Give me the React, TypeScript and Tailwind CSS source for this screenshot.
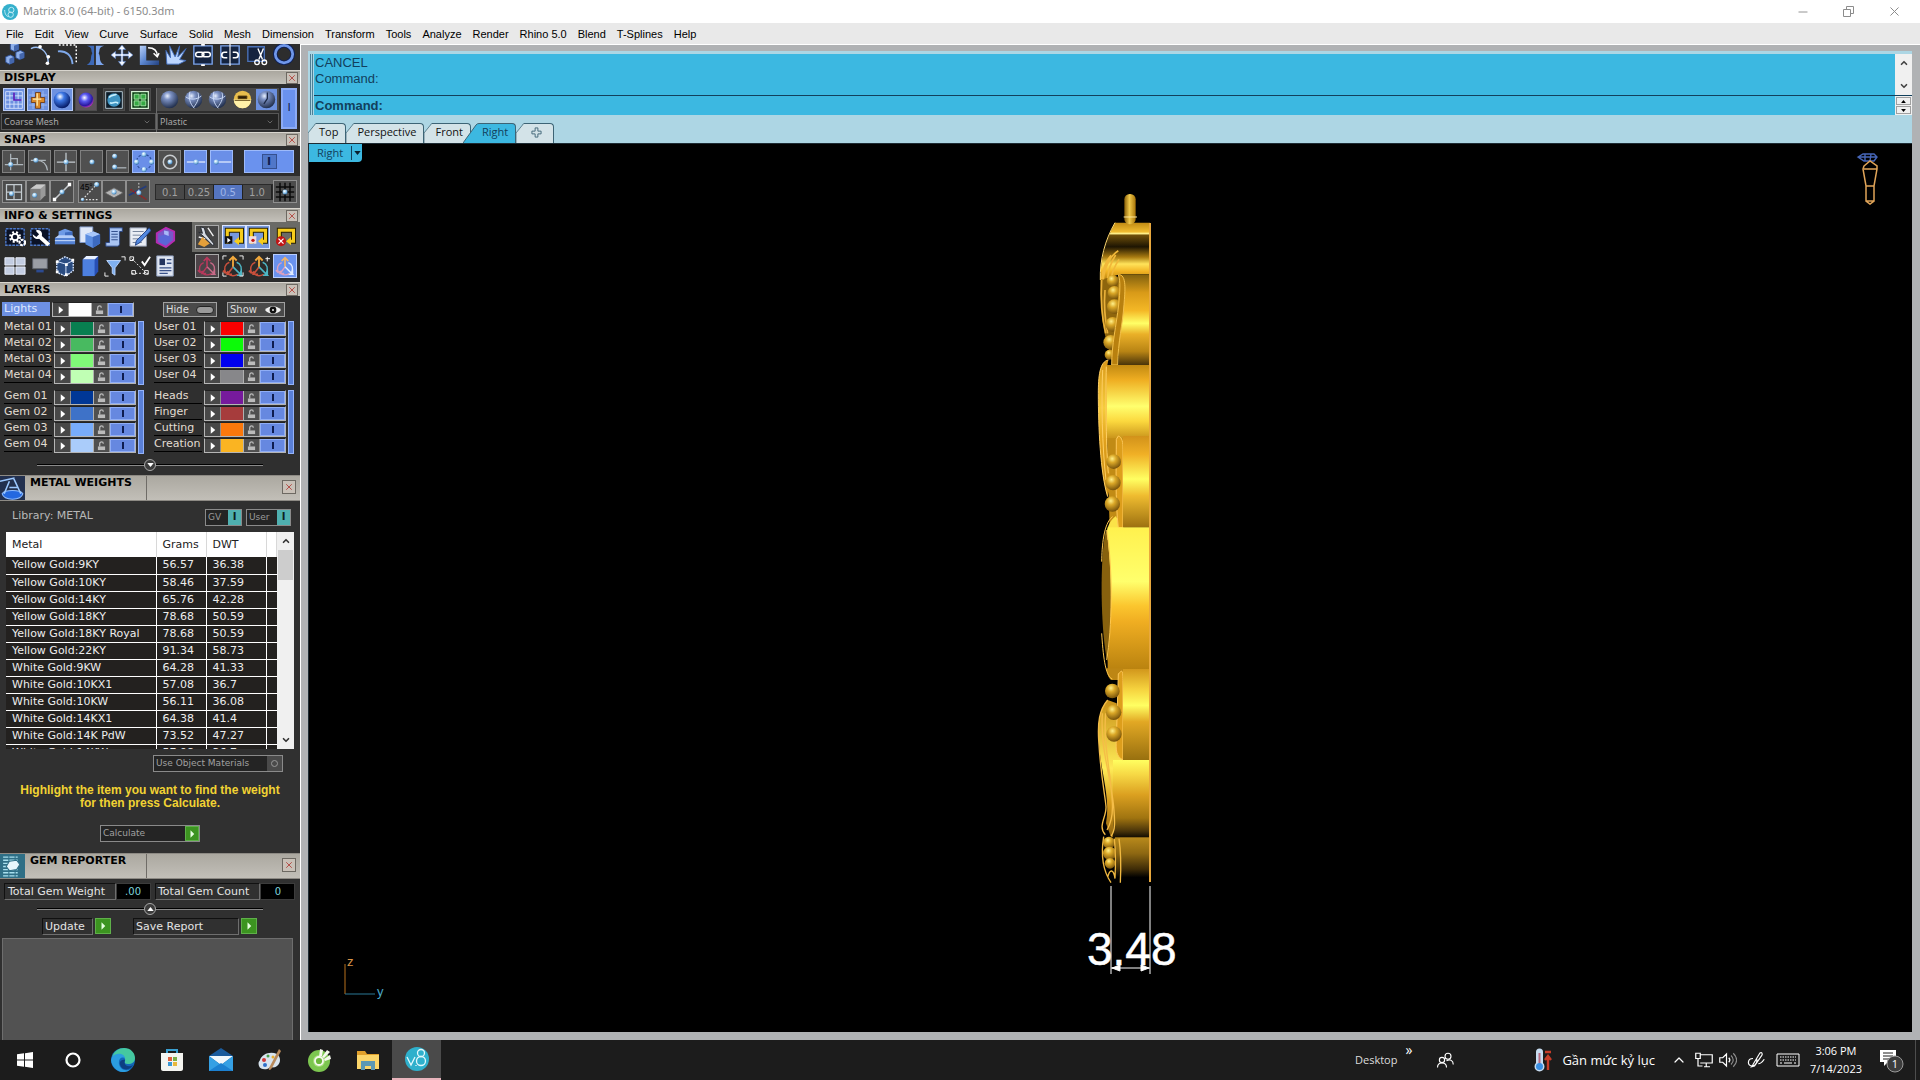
import type { ReactNode } from "react";
import { X, ChevronDown, ChevronUp, Minus } from "lucide-react";

const menus = [
  "File", "Edit", "View", "Curve", "Surface", "Solid", "Mesh", "Dimension", "Transform",
  "Tools", "Analyze", "Render", "Rhino 5.0", "Blend", "T-Splines", "Help",
];

const metals = [
  ["Yellow Gold:9KY", "56.57", "36.38"],
  ["Yellow Gold:10KY", "58.46", "37.59"],
  ["Yellow Gold:14KY", "65.76", "42.28"],
  ["Yellow Gold:18KY", "78.68", "50.59"],
  ["Yellow Gold:18KY Royal", "78.68", "50.59"],
  ["Yellow Gold:22KY", "91.34", "58.73"],
  ["White Gold:9KW", "64.28", "41.33"],
  ["White Gold:10KX1", "57.08", "36.7"],
  ["White Gold:10KW", "56.11", "36.08"],
  ["White Gold:14KX1", "64.38", "41.4"],
  ["White Gold:14K PdW", "73.52", "47.27"],
  ["White Gold:14KW", "57.98", "36.7"],
];

type Layer = { name: string; swatch: string };

const layerGroups: Layer[][] = [
  [
    { name: "Metal 01", swatch: "bg-[#087f50]" },
    { name: "Metal 02", swatch: "bg-[#48ba60]" },
    { name: "Metal 03", swatch: "bg-[#80f878]" },
    { name: "Metal 04", swatch: "bg-[#c0ffb4]" },
  ],
  [
    { name: "User 01", swatch: "bg-[#fa0000]" },
    { name: "User 02", swatch: "bg-[#0cfa08]" },
    { name: "User 03", swatch: "bg-[#0000ee]" },
    { name: "User 04", swatch: "bg-[#87878a]" },
  ],
  [
    { name: "Gem 01", swatch: "bg-[#003796]" },
    { name: "Gem 02", swatch: "bg-[#3e72c8]" },
    { name: "Gem 03", swatch: "bg-[#78acfa]" },
    { name: "Gem 04", swatch: "bg-[#aaccfa]" },
  ],
  [
    { name: "Heads", swatch: "bg-[#761a9c]" },
    { name: "Finger", swatch: "bg-[#a63c3c]" },
    { name: "Cutting", swatch: "bg-[#fa780c]" },
    { name: "Creation", swatch: "bg-[#fab422]" },
  ],
];

function Ico({ children, className = "size-6" }: { children: ReactNode; className?: string }) {
  return (
    <svg viewBox="0 0 24 24" fill="none" className={`shrink-0 ${className}`} aria-hidden="true">
      {children}
    </svg>
  );
}

function SharedGradients() {
  return (
    <svg className="absolute size-0" aria-hidden="true">
      <defs>
        <radialGradient id="ball" cx="0.38" cy="0.3" r="0.7">
          <stop offset="0" stopColor="#e8f0ff" />
          <stop offset="0.3" stopColor="#7d92c4" />
          <stop offset="1" stopColor="#23314f" />
        </radialGradient>
        <radialGradient id="blueBall" cx="0.38" cy="0.3" r="0.7">
          <stop offset="0" stopColor="#ffffff" />
          <stop offset="0.35" stopColor="#3d78e6" />
          <stop offset="1" stopColor="#051a66" />
        </radialGradient>
        <radialGradient id="violetBall" cx="0.4" cy="0.35" r="0.7">
          <stop offset="0" stopColor="#ffffff" />
          <stop offset="0.35" stopColor="#5a5af0" />
          <stop offset="0.75" stopColor="#2a18a0" />
          <stop offset="1" stopColor="#d83ac0" />
        </radialGradient>
        <radialGradient id="dot" cx="0.4" cy="0.35" r="0.7">
          <stop offset="0" stopColor="#ffffff" />
          <stop offset="0.5" stopColor="#9ccdf0" />
          <stop offset="1" stopColor="#2f6ea8" />
        </radialGradient>
        <linearGradient id="steel" x1="0" y1="0" x2="1" y2="1">
          <stop offset="0" stopColor="#b8d0f8" />
          <stop offset="0.5" stopColor="#5b86d0" />
          <stop offset="1" stopColor="#22407f" />
        </linearGradient>
        <radialGradient id="bead" cx="0.4" cy="0.3" r="0.75">
          <stop offset="0" stopColor="#fff08a" />
          <stop offset="0.35" stopColor="#dba828" />
          <stop offset="1" stopColor="#6d4a08" />
        </radialGradient>
      </defs>
    </svg>
  );
}

function Dot({ x, y, r = 3 }: { x: number; y: number; r?: number }) {
  return <circle cx={x} cy={y} r={r} fill="url(#dot)" />;
}

function CloseButton({ className = "" }: { className?: string }) {
  return (
    <button
      aria-label="Close"
      className={`flex items-center justify-center border border-[#6d6962] bg-[#c9c1b8] ${className}`}
    >
      <X className="size-[10px] text-[#b03a34]" strokeWidth={2} />
    </button>
  );
}

function SectionHeader({ title }: { title: string }) {
  return (
    <div className="flex h-[14px] items-center justify-between border-t border-[#d8d5ce] bg-linear-to-b from-[#aaa79f] to-[#c4c1ba] pr-[2px] pl-1">
      <h2 className="text-[11px] leading-[13px] font-bold text-black">{title}</h2>
      <CloseButton className="size-3" />
    </div>
  );
}

function PanelHeader({ title, icon }: { title: string; icon: ReactNode }) {
  return (
    <div className="flex h-[26px] border-y border-[#8d8a84] bg-linear-to-b from-[#aba8a0] to-[#c2bfb8]">
      <div className="w-[25px] overflow-hidden">{icon}</div>
      <h2 className="w-[122px] border-r border-[#6f6c67] pl-[5px] text-[11px] leading-[14px] font-bold whitespace-nowrap text-black">
        {title}
      </h2>
      <CloseButton className="mt-1 mr-1 ml-auto size-[14px]" />
    </div>
  );
}

const toolIcons: ReactNode[] = [
  <>
    <path d="M8 0l5-2 4 2v6l-5 2-4-2zM3 14l5-2 4 2v6l-5 2-4-2zM14 9l5-2 4 2v6l-5 2-4-2z" fill="#8fb0ea" stroke="#2d4f96" />
    <path d="M12 2l5-2v6l-5 2zM7 16l5-2v6l-5 2zM18 11l5-2v6l-5 2z" fill="#4467ad" />
  </>,
  <>
    <path d="M1 5C9 1 19 6 20 20" stroke="#9cc0f5" strokeWidth="1.6" />
    <circle cx="11" cy="3" r="2" fill="#fff" />
    <circle cx="20" cy="14" r="2" fill="#fff" />
    <circle cx="19" cy="21" r="2" fill="#fff" />
  </>,
  <>
    <path d="M2 1h18M21 2v20" stroke="#fff" strokeWidth="1.6" strokeDasharray="2 2" />
    <path d="M1 8c9-1 15 4 16 14" stroke="#7fa9ea" strokeWidth="2" />
  </>,
  <>
    <path d="M3 2c7 2 4 5 6 8-3 5 1 8-6 13h8V2z" fill="#3c68b8" />
    <path d="M22 2c-7 2-4 5-6 8 3 5-1 8 6 13h-9V2z" fill="#7ba4ec" />
  </>,
  <path d="M12 1l4 5h-3v5h6V8l5 4-5 4v-3h-6v6h3l-4 5-4-5h3v-6H5v3l-5-4 5-4v3h6V6H8z" fill="#f4f8ff" stroke="#4a77c9" strokeWidth=".6" />,
  <>
    <path d="M2 2h7v16h14v5H2z" fill="url(#steel)" />
    <path d="M11 4c6 0 10 3 10 9M17 10l4 4 2-4" stroke="#fff" strokeWidth="1.6" />
  </>,
  <path d="M2 22L1 7l5 8-1-13 6 12 5-12-2 12 9-9-7 12 7 1-8 4z" fill="#bcd6ff" stroke="#3c68b8" />,
  <>
    <path d="M2 2h20v20H2z" fill="#14233f" stroke="#7ba4ec" strokeWidth="1.5" />
    <rect x="4" y="9" width="9" height="5" rx="2.5" stroke="#fff" strokeWidth="1.6" />
    <rect x="11" y="9" width="9" height="5" rx="2.5" stroke="#fff" strokeWidth="1.6" />
    <path d="M10 1h4M10 23h4" stroke="#fff" strokeWidth="2" />
  </>,
  <>
    <path d="M2 2h20v20H2z" fill="#14233f" stroke="#7ba4ec" strokeWidth="1.5" />
    <path d="M9 9H6a3 3 0 000 6h3M15 9h3a3 3 0 010 6h-3" stroke="#fff" strokeWidth="1.8" />
    <path d="M12 0v24" stroke="#fff" strokeWidth="1.2" />
  </>,
  <>
    <path d="M2 3h18v16H2z" fill="#14233f" stroke="#4b72b8" strokeWidth="1.5" />
    <path d="M13 5l5 12M19 5l-5 12" stroke="#fff" strokeWidth="1.5" />
    <circle cx="12" cy="20" r="2.5" stroke="#fff" strokeWidth="1.5" />
    <circle cx="20" cy="20" r="2.5" stroke="#fff" strokeWidth="1.5" />
  </>,
  <>
    <circle cx="12" cy="11" r="9.5" stroke="#0e2158" strokeWidth="5" />
    <circle cx="12" cy="11" r="9.5" stroke="#6f97ea" strokeWidth="3" />
  </>,
];

function DisplayPanel() {
  const shell = "flex h-[23px] w-[22px] items-center justify-center border";
  const off = "border-[#4d4d4d] bg-[#3c3c3c]";
  const on = "border-[#b9cbf5] bg-[#6d91e0]";
  return (
    <div className="flex h-12 bg-[#2d2d2d] pt-1 pl-[1px]">
      <div className="w-[155px]">
        <div className="flex gap-[2px] pl-[2px]">
          <button aria-label="Grid" className={`${shell} ${on}`}>
            <Ico className="size-5">
              <path d="M2 2h20v20H2zM7 2v20M12 2v20M17 2v20M2 7h20M2 12h20M2 17h20" stroke="#dfe8ff" />
              <path d="M12 3v9h9" stroke="#5518b8" strokeWidth="2" />
            </Ico>
          </button>
          <button aria-label="Ring model" className={`${shell} ${on}`}>
            <Ico className="size-5">
              <path d="M1 6h22M1 12h22M1 18h22M6 1v22M18 1v22" stroke="#a5bff2" />
              <path d="M9 3h6v6h5v6h-5v7H9v-7H4V9h5z" fill="#d98a2c" stroke="#6b3510" />
              <path d="M11 4v15M6 11h10" stroke="#ffe9a8" strokeWidth="1.6" />
            </Ico>
          </button>
          <button aria-label="Shaded" className={`${shell} ${on}`}>
            <Ico className="size-5"><circle cx="12" cy="12" r="10" fill="url(#blueBall)" /></Ico>
          </button>
          <button aria-label="Rendered" className={`${shell} border-[#4d4d4d] bg-[#5d535b]`}>
            <Ico className="size-5"><circle cx="12" cy="12" r="9" fill="url(#violetBall)" /></Ico>
          </button>
          <button aria-label="Environment" className={`${shell} ml-1 ${off}`}>
            <Ico className="size-5">
              <path d="M2 2h20v20H2z" fill="#0d1d2a" stroke="#c8dce8" />
              <circle cx="12" cy="12" r="8" fill="#3f94c2" />
              <path d="M6 9c3-4 6-2 9-4M7 15c3 3 6-3 10 1" stroke="#c6f0ff" strokeWidth="2" />
            </Ico>
          </button>
          <button aria-label="Layout" className={`${shell} ml-[2px] ${off}`}>
            <Ico className="size-5">
              <path d="M2 2h20v20H2z" fill="#063d10" stroke="#d3f0d3" strokeWidth="1.5" />
              <path d="M5 5h6v6H5zM13 5h6v6h-6zM5 13h6v6H5zM13 13h6v6h-6z" fill="#35a844" stroke="#b7f5b7" />
            </Ico>
          </button>
        </div>
        <MeshSelect label="Mesh" value="Coarse Mesh" />
      </div>
      <div className="w-[123px] border-l border-[#6a6a6a]">
        <div className="flex h-[23px] items-center justify-around bg-[#4a4a4a]">
          {["plain", "wire", "wire2", "gold", "sel"].map((k) => (
            <button key={k} aria-label={`Material ${k}`} className={k === "sel" ? "bg-[#6d91e0]" : ""}>
              <Ico className="size-[21px]">
                <circle cx="12" cy="12" r="10" fill={k === "gold" ? "#e8bd4c" : "url(#ball)"} />
                {k.startsWith("wire") && (
                  <path d="M3 9c6 4 13 3 18-1M8 3c-2 7 0 14 5 19M17 4c2 5 0 11-5 17" stroke="#d5e4ff" />
                )}
                {k === "gold" && (
                  <>
                    <path d="M2 12h20a10 10 0 01-20 0z" fill="#fff1a8" />
                    <path d="M7 8h10v3H7zM3 13h18" fill="#2d1e06" stroke="#59400f" />
                  </>
                )}
                {k === "sel" && <path d="M13 11V4M13 11l-4 6" stroke="#1c2947" strokeWidth="1.500" />}
              </Ico>
            </button>
          ))}
        </div>
        <MeshSelect label="Material" value="Plastic" />
      </div>
      <button className="ml-[2px] h-[41px] w-4 border-2 border-[#8cabf5] bg-[#6a92ee] text-[11px] text-[#10204f]">I</button>
    </div>
  );
}

function MeshSelect({ label, value }: { label: string; value: string }) {
  return (
    <div className="relative mt-[2px] h-[17px] border border-[#565656] bg-[#232323]">
      <select aria-label={label} className="block h-full w-full appearance-none pl-[2px] font-['Noto_Sans'] text-[9px] leading-[14px] text-[#a8a8a8]">
        <option>{value}</option>
      </select>
      <ChevronDown className="pointer-events-none absolute top-1 right-1 size-2 text-[#8a8a8a]" />
    </div>
  );
}

const snapIcons: ReactNode[] = [
  <><path d="M8 2v20M1 15h22M8 8h8v7" stroke="#aeb6bc" strokeWidth="1.5" /><Dot x={8} y={15} /></>,
  <><path d="M1 10h18M8 10c8 0 12 5 13 12" stroke="#aeb6bc" strokeWidth="1.5" /><Dot x={7} y={10} /></>,
  <><path d="M12 1v22M1 12h22" stroke="#c3cacf" strokeWidth="1.5" /><Dot x={12} y={12} /></>,
  <Dot x={12} y={12} />,
  <><path d="M8 19h14" stroke="#aeb6bc" strokeWidth="1.5" /><Dot x={8} y={5} /><Dot x={8} y={18} /></>,
  <><circle cx="12" cy="12" r="9" stroke="#2d4f9c" strokeDasharray="3 2" strokeWidth="1.5" /><Dot x={12} y={3} /><Dot x={12} y={21} /><Dot x={3} y={12} /><Dot x={21} y={12} /></>,
  <><circle cx="12" cy="12" r="8" stroke="#c9cdd0" strokeWidth="1.8" /><Dot x={12} y={12} /></>,
  <><path d="M1 12h22" stroke="#e3ecff" strokeWidth="1.5" /><Dot x={12} y={12} /></>,
  <><path d="M4 12h19" stroke="#e3ecff" strokeWidth="1.5" /><Dot x={5} y={12} /></>,
];

const planeIcons: ReactNode[] = [
  <><path d="M3 3h18v18H3zM12 3v18M3 12h18" stroke="#c3cacf" strokeWidth="1.5" /><Dot x={9} y={14} /></>,
  <><path d="M3 8l7-5h11v13l-6 6H3z" fill="#9a9a9a" /><path d="M3 8h12v14H3z" fill="#7d7d7d" /><path d="M3 8l7-5h11l-6 5z" fill="#c9c9c9" /><Dot x={8} y={16} /></>,
  <><path d="M3 21L21 3" stroke="#c9cdd0" strokeWidth="2" /><path d="M1 19h4v4H1zM19 1h4v4h-4z" fill="#fff" /><Dot x={12} y={12} /></>,
  <><path d="M3 21L19 4M3 21h19" stroke="#e0e0e0" strokeWidth="1.5" strokeDasharray="2 2" /><Dot x={20} y={3} /><Dot x={3} y={21} r={2} /><text x="0" y="9" fontSize="10" fill="#000" fontFamily="Liberation Sans">45°</text></>,
  <><path d="M1 13l11-6 11 6-11 6z" fill="#b5b5b5" stroke="#5d5d5d" /><Dot x={12} y={12} /></>,
  <><path d="M1 16L22 5" stroke="#233b7c" strokeWidth="2" /><path d="M3 9l19 12" stroke="#9c2020" strokeWidth="2" strokeDasharray="2 1" /><path d="M13 1v11" stroke="#eee" strokeDasharray="2 2" /><Dot x={13} y={13} /></>,
];

function SnapsPanel() {
  return (
    <>
      <div className="flex h-[30px] items-start bg-[#2d2d2d] pt-1 pl-[2px]">
        {snapIcons.map((icon, i) => (
          <button
            key={i}
            aria-label={`Snap ${i + 1}`}
            className={`mr-[3px] flex h-[23px] w-[23px] items-center justify-center border ${
              [5, 7, 8].includes(i) ? "border-[#9dbafa] bg-[#6a8fe8]" : "border-[#808080] bg-[#505050]"
            }`}
          >
            <Ico className="size-5">{icon}</Ico>
          </button>
        ))}
        <button className="ml-2 flex h-[23px] w-[50px] items-center justify-center border border-[#9dbafa] bg-[#6a92ee]">
          <span className="h-[15px] w-[15px] border border-[#35508f] bg-[#5077c9] text-center text-[11px] leading-[13px] font-bold text-[#10204f]">I</span>
        </button>
      </div>
      <div className="flex h-8 items-start bg-[#5e5e5e] pt-1 pl-[2px]">
        {planeIcons.map((icon, i) => (
          <button
            key={i}
            aria-label={`Plane ${i + 1}`}
            className={`flex h-[23px] w-6 items-center justify-center border border-[#8f8f8f] bg-[#4c4c4c] ${i === 3 ? "ml-1" : ""}`}
          >
            <Ico className="size-5">{icon}</Ico>
          </button>
        ))}
        <div className="mt-1 ml-[5px] flex border border-[#2a2a2a]">
          {["0.1", "0.25", "0.5", "1.0"].map((v) => (
            <button
              key={v}
              className={`h-[14px] w-[29px] border-r border-[#222] text-center text-[10px] leading-[13px] ${
                v === "0.5" ? "bg-[#5575c0] text-[#9db4e8]" : "bg-[#484848] text-[#a0a0a0]"
              }`}
            >
              {v}
            </button>
          ))}
        </div>
        <button aria-label="Grid snap" className="flex h-[23px] w-6 shrink-0 items-center justify-center border border-[#8f8f8f] bg-[#4c4c4c]">
          <Ico className="size-5">
            <path d="M6 1v22M12 1v22M18 1v22M1 6h22M1 12h22M1 18h22" stroke="#0b0b0b" strokeWidth="1.8" />
            <Dot x={12} y={12} />
          </Ico>
        </button>
      </div>
    </>
  );
}

const windowFrame = <path d="M2 3h20v18H2z" fill="#0b1226" stroke="#4d79c9" strokeWidth="1.5" strokeDasharray="3 1" />;

const infoTop: ReactNode[] = [
  <>{windowFrame}<circle cx="12" cy="12" r="5" stroke="#fff" strokeWidth="3" strokeDasharray="2 2" /><circle cx="12" cy="12" r="3.5" stroke="#fff" strokeWidth="2" /><circle cx="20" cy="18" r="3" stroke="#fff" strokeWidth="2.400" strokeDasharray="3 1" /></>,
  <>{windowFrame}<path d="M8 6l3 3-3 3-4-3c0 4 4 6 7 5l9 8 3-3-9-8c1-4-1-7-6-7z" fill="#fff" /></>,
  <><path d="M5 6l7-3 8 3v7H5z" fill="#6d9ae6" /><path d="M12 7l8-1v7h-8z" fill="#3f6cc0" /><path d="M1 13h22v7H1z" fill="#5482d4" /><path d="M1 13l4-3h15l3 3z" fill="#b4cdf8" /><path d="M1 16h22" stroke="#d8e6ff" /></>,
  <><path d="M1 1h14v17H1z" fill="#dfe8f8" stroke="#8099c9" /><path d="M7 9l9-3 7 3v10l-8 5-8-4z" fill="#5b8de0" /><path d="M7 9l9-3 7 3-8 3z" fill="#a7c6fa" /><path d="M15 12l8-3v10l-8 5z" fill="#3c6ac0" /></>,
  <><path d="M6 2h14v4h-3v13c0 3-2 3-3 3H2v-4h4z" fill="#a9c4f2" stroke="#2a4686" /><path d="M8 6h7M8 9h7M8 12h7M8 15h7" stroke="#2a4686" /></>,
  <><path d="M1 2h18v20H1z" fill="#e9edf4" stroke="#8c97ab" /><path d="M4 6h12M4 10h9M4 14h6M4 18h10" stroke="#6e7d96" /><path d="M22 2l2 3-12 13-5 3 1-5z" fill="#5288de" stroke="#1f3f84" /></>,
  <><path d="M3 8l10-6 9 4v10l-9 7-10-5z" fill="#7a58c8" stroke="#b82ab0" strokeWidth="2" /><path d="M6 11l7-2 5 2v5l-5 5-7-3z" fill="#5a66d8" /><path d="M11 5l5 1v5l-5-2z" fill="#a8b8f8" /></>,
];

const infoBottom: ReactNode[] = [
  <path d="M1 3h10v8H1zM13 3h10v8H13zM1 13h10v8H1zM13 13h10v8H13z" fill="#c3cde2" stroke="#f0f4ff" />,
  <><path d="M4 4h16v11H4z" fill="#9b9ea5" stroke="#5b5f68" /><path d="M8 16h8v3H8z" fill="#2c4a90" /></>,
  <><path d="M3 7l9-5 9 4v11l-8 6-10-4z" fill="#2b4c80" stroke="#d7e6ff" strokeWidth="1.5" strokeDasharray="2 1" /><path d="M3 7l10 3 8-4M13 10v13" stroke="#d7e6ff" /><path d="M2 6h3v3H2zM19 4h3v3h-3zM12 9h3v3h-3zM2 17h3v3H2zM12 20h3v3h-3z" fill="#fff" /></>,
  <><path d="M4 5l4-4h13v17l-4 5H4z" fill="#274fb5" /><path d="M4 5l4-4h13l-4 4z" fill="#e8f0ff" /><path d="M4 5h13v18H4z" fill="#4d80e0" /></>,
  <><path d="M3 6h15l-6 8v8l-3-2v-6z" fill="#7fb0f0" stroke="#bdd8ff" /><path d="M19 2h4v4M1 19v4h4" stroke="#fff" /></>,
  <><path d="M3 4l17 17M3 20h18" stroke="#fff" strokeDasharray="2 2" /><path d="M1 2h4v4H1zM3 17h4v4H3zM17 17h4v4h-4z" stroke="#fff" /><path d="M14 7l3 4 6-9" stroke="#fff" strokeWidth="2" /></>,
  <><path d="M3 1h18v22H3z" fill="#dfe6f2" stroke="#8ea0c0" /><path d="M6 4h6v7H6z" fill="#23345e" /><path d="M14 5h5M14 9h5M6 14h13M6 17h13M6 20h9" stroke="#3a5288" strokeWidth="1.5" /></>,
];

const loopIcon = (mark: ReactNode) => (
  <>
    <path d="M4 20V4h17v13h-5" stroke="#2b2300" strokeWidth="6" />
    <path d="M4 20V4h17v13h-4" stroke="#f6cc1c" strokeWidth="3.6" />
    <path d="M18 12l-6 5 6 5z" fill="#f6cc1c" />
    {mark}
  </>
);

// Three crossing arrows: up, lower left and lower right.
function AxisIcon({ a, b, c }: { a: string; b: string; c: string }) {
  return (
    <>
      <path d="M12 13V2M8 6l4-4 4 4" stroke={a} strokeWidth="2" />
      <path d="M8 8C3 10 2 15 4 20M12 13l-6 8h5M4 20l-3-3M4 20l3-2" stroke={b} strokeWidth="1.800" />
      <path d="M16 8c5 2 6 7 4 12M12 13l9 9h-5M21 22v-5" stroke={c} strokeWidth="1.800" />
      <path d="M7 21c3 2 7 2 10 0" stroke={b} strokeWidth="1.500" />
    </>
  );
}

function InfoPanel() {
  return (
    <div className="bg-[#2b2b2b]">
      <div className="flex h-[30px]">
        <div className="flex flex-1 items-center gap-[3px] pl-1">
          {infoTop.map((icon, i) => (
            <button key={i} aria-label={`Info tool ${i + 1}`}><Ico className="size-[22px]">{icon}</Ico></button>
          ))}
        </div>
        <div className="flex w-[108px] items-center bg-[#6a6a66] pl-[3px]">
          <button aria-label="Paint" className="flex size-6 items-center justify-center border border-[#a9a9a9] bg-[#454545]">
            <Ico className="size-[22px]">
              <path d="M5 1l4 1 2 7 9 11-2 1-9-9-6-5 4 1z" fill="#d8dde4" stroke="#22262e" />
              <path d="M13 2l6 9M3 12l7 2" stroke="#f0f0f0" strokeWidth="1.500" />
              <path d="M2 20l5-8 8 7-6 4z" fill="#e5a03a" />
            </Ico>
          </button>
          <button aria-label="Play history" className="ml-[3px] flex size-6 items-center justify-center border border-[#dce6ff] bg-[#7799de]">
            <Ico className="size-5">{loopIcon(<><path d="M1 11h9v9H1z" fill="#111" /><path d="M4 13l4 3-4 3z" fill="#fff" /></>)}</Ico>
          </button>
          <button aria-label="Record history" className="flex size-6 items-center justify-center border border-[#dce6ff] bg-[#7799de]">
            <Ico className="size-5">{loopIcon(<><path d="M1 11h9v9H1z" fill="#f2dede" /><circle cx="6" cy="16" r="2" fill="#c01717" /></>)}</Ico>
          </button>
          <button aria-label="Stop history" className="ml-1 flex size-6 items-center justify-center">
            <Ico className="size-5">{loopIcon(<><circle cx="6" cy="17" r="6" fill="#c01414" /><path d="M3 14l6 6m0-6l-6 6" stroke="#fff" strokeWidth="1.500" /></>)}</Ico>
          </button>
        </div>
      </div>
      <div className="flex h-[30px] items-start pt-[2px]">
        <div className="flex flex-1 items-center gap-[3px] pt-[1px] pl-1">
          {infoBottom.map((icon, i) => (
            <button key={i} aria-label={`View tool ${i + 1}`}><Ico className="size-[22px]">{icon}</Ico></button>
          ))}
        </div>
        <div className="flex w-[108px] items-center gap-[2px] pl-[3px]">
          <button aria-label="Axis lock" className="flex size-6 items-center justify-center border border-[#a9a9a9] bg-[#4c4448]">
            <Ico className="size-5"><AxisIcon a="#b8385c" b="#b8385c" c="#c86a88" /></Ico>
          </button>
          <button aria-label="Axis full" className="flex size-6 items-center justify-center">
            <Ico className="size-[22px]">
              <AxisIcon a="#f2a93c" b="#c9503c" c="#4db6c4" />
              <path d="M1 5V1h4M19 1h4v4M1 19v4h4M23 19v4h-4" stroke="#fff" />
            </Ico>
          </button>
          <button aria-label="Axis add" className="flex size-6 items-center justify-center">
            <Ico className="size-[22px]"><AxisIcon a="#f2a93c" b="#c9503c" c="#4db6c4" /><path d="M21 2v5M19 4h5" stroke="#fff" /></Ico>
          </button>
          <button aria-label="Axis selected" className="flex size-6 items-center justify-center border border-[#b8ceff] bg-[#6a92ee]">
            <Ico className="size-5"><AxisIcon a="#f0b46a" b="#d9a0c0" c="#dfeaff" /></Ico>
          </button>
        </div>
      </div>
    </div>
  );
}

function LayerControls({ name, swatch }: Layer) {
  const cell = "flex items-center justify-center border-r border-[#8d8d8d]";
  return (
    <div className="flex h-[15px] w-[82px] border border-[#b5b5b5] border-t-[#222]">
      <button aria-label={`${name} menu`} className={`${cell} w-4 bg-[#484848]`}>
        <svg viewBox="0 0 8 10" className="h-2 w-[6px]"><path d="M1 0l6 5-6 5z" fill="#fff" /></svg>
      </button>
      <button aria-label={`${name} colour`} className={`w-[23px] border-r border-[#b0b0b0] ${swatch}`} />
      <button aria-label={`${name} lock`} className={`${cell} w-4 bg-[#505050]`}>
        <svg viewBox="0 0 10 11" className="h-[10px] w-[9px]" fill="none">
          <path d="M3 6V3a2 2 0 014 0" stroke="#bbb" strokeWidth="1.4" />
          <path d="M1 6h8v4H1z" fill="#bbb" />
        </svg>
      </button>
      <button aria-label={`${name} visible`} className="flex flex-1 items-center justify-center border border-[#8fadf5] bg-[#6688e0]">
        <span className="h-[7px] w-[2px] bg-[#0e1c50]" />
      </button>
    </div>
  );
}

function LayerGroup({ layers }: { layers: Layer[] }) {
  return (
    <div className="flex">
      <ul>
        {layers.map((l) => (
          <li key={l.name} className="flex h-4">
            <span className="mr-[2px] h-[14px] w-12 border-b border-black text-[11px] leading-[12px] whitespace-nowrap text-[#e2ddd2]">
              {l.name}
            </span>
            <LayerControls {...l} />
          </li>
        ))}
      </ul>
      <button aria-label="Toggle group" className="ml-[2px] h-16 w-[6px] border border-[#95b3fa] bg-[#5a80d8]" />
    </div>
  );
}

function Divider({ up = false }: { up?: boolean }) {
  return (
    <div className="flex h-[14px] items-center px-[37px]">
      <span className="h-[2px] flex-1 border-t border-black bg-[#8a8a8a]" />
      <button aria-label="Expand" className="flex size-3 items-center justify-center rounded-full border border-[#a8a8a8] bg-[#3c3c3c]">
        <svg viewBox="0 0 8 5" className="h-1 w-[7px]"><path d={up ? "M0 5l4-5 4 5z" : "M0 0l4 5 4-5z"} fill="#fff" /></svg>
      </button>
      <span className="h-[2px] flex-1 border-t border-black bg-[#8a8a8a]" />
    </div>
  );
}

function LayersPanel() {
  const action = "flex h-[15px] items-center justify-between border border-[#a0a0a0] bg-[#4a4a4a] px-[2px] text-[10px] leading-[13px] text-[#dedede]";
  return (
    <div className="bg-[#2f2f2f] pt-[6px] pb-[3px]">
      <div className="flex h-[19px] items-start pl-[2px]">
        <span className="mr-[2px] h-[14px] w-12 bg-[#6d90e2] pl-[2px] text-[11px] leading-[13px] text-[#dfe8ff]">Lights</span>
        <LayerControls name="Lights" swatch="bg-white" />
        <button className={`${action} ml-[29px] w-[54px]`}>
          Hide
          <span className="h-2 w-[18px] rounded-full border border-[#222] bg-[#9a9a9a]" />
        </button>
        <button className={`${action} ml-[10px] w-[58px]`}>
          Show
          <svg viewBox="0 0 18 10" className="h-[10px] w-[18px]">
            <path d="M1 5c4-5 12-5 16 0-4 5-12 5-16 0z" fill="#efefef" />
            <circle cx="9" cy="5" r="3.400" fill="#111" />
            <circle cx="9" cy="5" r="1" fill="#eee" />
          </svg>
        </button>
      </div>
      <div className="grid grid-cols-[150px_1fr] gap-y-[5px] pl-1">
        {layerGroups.map((g) => (
          <LayerGroup key={g[0].name} layers={g} />
        ))}
      </div>
      <div className="mt-1"><Divider /></div>
    </div>
  );
}

function MetalWeights() {
  const toggle = "flex h-[17px] items-center justify-between border border-[#8a8a8a] bg-[#242424] pl-[2px] text-[9px] text-[#9a9a9a]";
  return (
    <>
      <PanelHeader
        title="METAL WEIGHTS"
        icon={
          <Ico className="size-[25px]">
            <path d="M0 0h24v24H0z" fill="#22304f" />
            <path d="M2 17c3-4 17-4 20 0-2 7-18 7-20 0z" fill="#2468e0" stroke="#8ebcff" />
            <path d="M0 5l14-3M9 5L4 17M13 2l7 15M9 11h8" stroke="#9cc8ff" strokeWidth="1.500" />
          </Ico>
        }
      />
      <div className="h-[352px] bg-[#303030] px-[6px] pt-2">
        <div className="flex items-start gap-1 pr-[3px]">
          <span className="flex-1 pl-[6px] text-[11px] leading-[14px] text-[#b8b8b8]">Library: METAL</span>
          <button className={`${toggle} w-[37px]`}>
            GV<span className="h-[15px] w-[13px] bg-[#4fb0b0] text-center text-[10px] leading-[14px] font-bold text-[#0c2020]">I</span>
          </button>
          <button className={`${toggle} w-[45px]`}>
            User<span className="h-[15px] w-[13px] bg-[#4fb0b0] text-center text-[10px] leading-[14px] font-bold text-[#0c2020]">I</span>
          </button>
        </div>
        <div className="mt-[6px] flex h-[217px] overflow-hidden">
          <table className="w-[271px] table-fixed border-collapse self-start text-left text-[11px] leading-[14px] text-[#ededed]">
            <colgroup>
              <col className="w-[150px]" />
              <col className="w-[50px]" />
              <col className="w-[60px]" />
              <col />
            </colgroup>
            <thead className="bg-white text-[#222]">
              <tr className="h-[25px]">
                {["Metal", "Grams", "DWT", ""].map((h) => (
                  <th key={h} className="border-r border-[#d8d8d8] pl-[6px] font-normal">{h}</th>
                ))}
              </tr>
            </thead>
            <tbody className="bg-[#23211f]">
              {metals.map(([name, grams, dwt]) => (
                <tr key={name} className="h-[17px] border-b border-white">
                  <td className="border-r border-white pl-[6px] whitespace-nowrap">{name}</td>
                  <td className="border-r border-white pl-[6px]">{grams}</td>
                  <td className="border-r border-white pl-[6px]">{dwt}</td>
                  <td />
                </tr>
              ))}
            </tbody>
          </table>
          <div className="flex w-[17px] flex-col items-center bg-[#f0f0f0]">
            <button aria-label="Scroll up"><ChevronUp className="my-1 size-[10px] text-[#333]" strokeWidth={4} /></button>
            <div className="h-[30px] w-[15px] bg-[#cdcdcd]" />
            <button aria-label="Scroll down" className="mt-auto"><ChevronDown className="my-1 size-[10px] text-[#333]" strokeWidth={4} /></button>
          </div>
        </div>
        <button className="mt-[6px] ml-[147px] flex h-[17px] w-[130px] items-center justify-between border border-[#8a8a8a] bg-[#242424] pl-[2px] text-[9px] text-[#a0a0a0]">
          Use Object Materials
          <span className="flex h-[15px] w-[15px] items-center justify-center bg-[#4a4a4a]">
            <span className="size-[7px] rounded-full border border-[#999]" />
          </span>
        </button>
        <p className="mt-3 text-center font-['Liberation_Sans'] text-[12px] leading-[13px] font-bold whitespace-nowrap text-[#f2d333]">
          Highlight the item you want to find the weight
          <br />
          for then press Calculate.
        </p>
        <button className="mx-auto mt-[15px] flex h-[17px] w-[100px] items-center justify-between border border-[#8a8a8a] bg-[#242424] pl-[2px] text-[9px] text-[#a0a0a0]">
          Calculate
          <GreenArrow className="h-[15px] w-[14px]" />
        </button>
      </div>
    </>
  );
}

function GreenArrow({ className }: { className: string }) {
  return (
    <span className={`flex items-center justify-center border border-[#5fb04a] bg-[#3c9420] ${className}`}>
      <svg viewBox="0 0 8 10" className="h-2 w-[6px]"><path d="M2 0l5 5-5 5z" fill="#e6ffe0" /></svg>
    </span>
  );
}

function GemReporter() {
  const box = "h-[17px] border border-[#6e6e6e] border-t-[#111] border-l-[#111] text-[11px] leading-[15px] text-[#e4e4e4]";
  return (
    <>
      <PanelHeader
        title="GEM REPORTER"
        icon={
          <Ico className="size-[25px]">
            <path d="M0 0h24v24H0z" fill="#2f6f86" />
            <path d="M3 3h14M3 6h14M3 9h14M3 12h14M3 15h14M3 18h14M3 21h14" stroke="#a8e0ee" strokeWidth="1.400" strokeDasharray="5 1" />
            <path d="M6 12l3-5 7-1 3 4-3 5-7 1z" fill="#e6f6fb" stroke="#2f6f86" />
          </Ico>
        }
      />
      <div className="flex flex-1 flex-col bg-[#303030] pt-1">
        <div className="flex pl-1 whitespace-nowrap">
          <label htmlFor="gem-weight" className={`${box} w-[112px] pl-[3px]`}>Total Gem Weight</label>
          <input id="gem-weight" readOnly value=".00" className="mr-1 h-[17px] w-[35px] border border-[#3c3c3c] bg-black pr-[9px] text-right text-[10px] text-[#7fd4dc]" />
          <label htmlFor="gem-count" className={`${box} w-[105px] pl-[2px]`}>Total Gem Count</label>
          <input id="gem-count" readOnly value="0" className="h-[17px] w-[35px] border border-[#3c3c3c] bg-black pr-[13px] text-right text-[10px] text-[#7fd4dc]" />
        </div>
        <div className="mt-[2px]"><Divider up /></div>
        <div className="mt-[2px] flex pl-[42px]">
          <button className="flex h-[17px]"><span className={`${box} w-[51px] pl-[2px] text-left`}>Update</span><GreenArrow className="ml-[2px] size-4" /></button>
          <button className="ml-[22px] flex h-[17px]"><span className={`${box} w-[106px] pl-[2px] text-left`}>Save Report</span><GreenArrow className="ml-[2px] size-4" /></button>
        </div>
        <textarea aria-label="Gem report" readOnly className="mt-[3px] mr-[7px] ml-[2px] flex-1 resize-none border border-b-0 border-[#6e6e6e] bg-[#525252]" />
      </div>
    </>
  );
}

function Sidebar() {
  return (
    <aside className="flex w-[300px] shrink-0 flex-col bg-[#2d2d2d] font-['DejaVu_Sans',sans-serif]">
      <div className="flex h-[26px] overflow-hidden">
        {toolIcons.map((icon, i) => (
          <button key={i} aria-label={`Tool ${i + 1}`} className="flex w-[27px] items-start justify-center">
            <Ico className="size-[22px]">{icon}</Ico>
          </button>
        ))}
      </div>
      <SectionHeader title="DISPLAY" />
      <DisplayPanel />
      <SectionHeader title="SNAPS" />
      <SnapsPanel />
      <SectionHeader title="INFO & SETTINGS" />
      <InfoPanel />
      <SectionHeader title="LAYERS" />
      <LayersPanel />
      <MetalWeights />
      <GemReporter />
    </aside>
  );
}

function CommandBar() {
  return (
    <div className="mt-[3px] flex pl-[2px] font-['Liberation_Sans',sans-serif] text-[13px] text-[#12405c]">
      <div className="mr-px w-[3px] border-x border-[#4c7f96]" />
      <div className="flex-1 bg-[#3cb8e1]">
        <div className="h-[42px] border-b border-[#12405c] pt-px pl-px leading-4">
          <p>CANCEL</p>
          <p>Command:</p>
        </div>
        <div className="flex h-[19px] items-center pl-px">
          <label htmlFor="command" className="font-bold">Command:</label>
          <input id="command" className="ml-1 flex-1 outline-none" />
        </div>
      </div>
      <div className="flex w-[17px] flex-col bg-[#f0f0f0] text-[#444]">
        <div className="flex h-[42px] flex-col items-center justify-between border-b border-[#12405c] py-1">
          <button aria-label="Scroll up"><ChevronUp className="size-[10px]" strokeWidth={4} /></button>
          <button aria-label="Scroll down"><ChevronDown className="size-[10px]" strokeWidth={4} /></button>
        </div>
        {["M0 5l4-5 4 5z", "M0 0l4 5 4-5z"].map((d, i) => (
          <button key={d} aria-label={i ? "Next" : "Previous"} className="mx-[1px] mt-px flex h-2 items-center justify-center border border-[#a0a0a0]">
            <svg viewBox="0 0 8 5" className="h-[3px] w-[5px]"><path d={d} fill="#000" /></svg>
          </button>
        ))}
      </div>
    </div>
  );
}

function Tab({ label, active = false }: { label: ReactNode; active?: boolean }) {
  return (
    <button className={`flex h-5 ${active ? "-ml-2" : ""}`} aria-pressed={active}>
      <svg
        viewBox="0 0 16 20"
        preserveAspectRatio="none"
        className={`h-5 ${active ? "w-4" : "w-2"}`}
        fill={active ? "#3cb8e1" : "#d3e3e8"}
      >
        <path d={active ? "M0 20L13 2q1-1.500 3-1.500V20z" : "M0 20V10L13 2q1-1.500 3-1.500V20z"} />
        <path d={active ? "M0 20L13 2q1-1.500 3-1.500" : "M0 20V10L13 2q1-1.500 3-1.500"} fill="none" stroke="#3d6475" />
      </svg>
      <span
        className={`h-5 rounded-tr border-t border-r border-[#3d6475] pr-[7px] pl-[3px] leading-[15px] ${
          active ? "bg-[#3cb8e1] text-[#12405c]" : "bg-[#d3e3e8] text-[#111]"
        }`}
      >
        {label}
      </span>
    </button>
  );
}

const stop = (offset: number, color: string) => <stop key={offset} offset={offset} stopColor={color} />;

function Band({ id, x, y, h, stops }: { id: string; x: number; y: number; h: number; stops: [number, string][] }) {
  return (
    <>
      <linearGradient id={id} x1="0" y1="0" x2="0" y2="1">
        {stops.map(([o, c]) => stop(o, c))}
      </linearGradient>
      <rect x={x} y={y} width={267 - x} height={h} fill={`url(#${id})`} />
    </>
  );
}

function Beads({ at }: { at: [number, number, number][] }) {
  return <>{at.map(([x, y, r]) => <circle key={y} cx={x} cy={y} r={r} fill="url(#bead)" />)}</>;
}

// Side view of the pendant; the two halves are drawn at three times their size.
function Pendant() {
  return (
    <svg viewBox="1040 180 140 810" className="h-[810px] w-[140px]" fill="none" role="img" aria-label="Pendant, right view">
      <defs>
        <linearGradient id="bail" x1="0" x2="1">
          {stop(0, "#8a6008")}{stop(0.45, "#f0c84a")}{stop(1, "#a87408")}
        </linearGradient>
        <linearGradient id="crown" x1="0" y1="128" x2="0" y2="300" gradientUnits="userSpaceOnUse">
          {stop(0, "#c08a14")}{stop(0.16, "#f0bc30")}{stop(0.19, "#fff08a")}{stop(0.22, "#6e4f0a")}
          {stop(0.42, "#1e1502")}{stop(0.6, "#a87a10")}{stop(0.72, "#ffe35a")}{stop(0.85, "#f2b424")}{stop(1, "#b88212")}
        </linearGradient>
        <linearGradient id="side" x1="0" y1="540" x2="0" y2="950" gradientUnits="userSpaceOnUse">
          {stop(0, "#d8981a")}{stop(0.35, "#f6cc3c")}{stop(0.6, "#e0a01c")}{stop(1, "#c48a14")}
        </linearGradient>
        <linearGradient id="lower" x1="0" y1="540" x2="0" y2="950" gradientUnits="userSpaceOnUse">
          {stop(0, "#c89018")}{stop(0.5, "#ffec58")}{stop(0.75, "#d89c1c")}{stop(1, "#8e6410")}
        </linearGradient>
      </defs>

      <g transform="translate(1060 180) scale(.33333)">
        <path d="M118 290c0 60 2 120 14 175l20 75 30-70V290z" fill="#8e650d" />
        <path d="M162 128h105v155h-90l-59 17c0-60 16-120 44-172z" fill="url(#crown)" />
        <path d="M162 128c-30 52-46 112-44 172" stroke="#ffd970" strokeWidth="3" />
        <path d="M172 212c-22 12-42 50-45 86M164 225c-14 22-22 44-24 70M174 238c-10 16-20 34-22 52M150 226c-16 18-25 42-28 72" stroke="#f1b83a" strokeWidth="5" />
        <path d="M122 300c-4 60 0 110 12 160M132 330c-4 50 0 90 8 130" stroke="#e9b03a" strokeWidth="5" />
        <Beads at={[[155, 303, 18], [160, 338, 20], [160, 380, 22], [155, 433, 22], [149, 487, 22], [146, 524, 15]]} />
        <Band id="band2" x={172} y={283} h={272} stops={[[0, "#80600e"], [0.2, "#d89a18"], [0.4, "#f4b826"], [0.54, "#ffff66"], [0.66, "#eab028"], [0.85, "#b88414"], [1, "#49340a"]]} />
        <path d="M172 284c26-2 20 50 17 90-4 60-18 110-19 181h-18c0-60 14-120 21-180 4-40 6-72-1-91z" fill="#b8800f" stroke="#f3c04a" strokeWidth="3" />

        <Band id="band3" x={138} y={555} h={225} stops={[[0, "#c28a12"], [0.2, "#efae22"], [0.55, "#ffff6e"], [0.75, "#fbd83e"], [1, "#c58e18"]]} />
        <path d="M138 775h50v268h-42z" fill="#c18b15" />
        <path d="M142 540c-26 4-30 50-30 100 0 100 6 240 28 310l10-40-12-110V560z" fill="url(#side)" />
        <path d="M142 540c-26 4-30 50-30 100 0 100 6 240 28 310M125 570c-4 90-2 230 10 330M136 560c-3 90 0 260 6 320" stroke="#ffcf62" strokeWidth="3" />
        <path d="M135 1080c0-36 12-60 30-72l15 35h87v37z" fill="#fbe348" />
        <path d="M172 768c12 4 14 20 14 40v235h-14c-10-80-6-190-6-265z" fill="#dd9e1c" stroke="#ffc95a" strokeWidth="3" />
        <Band id="band4" x={186} y={768} h={275} stops={[[0, "#d2921a"], [0.2, "#f0b026"], [0.47, "#ffff62"], [0.65, "#efbc30"], [1, "#9c7010"]]} />
        <Beads at={[[158, 845, 22], [156, 908, 23], [154, 972, 23]]} />
        <rect x="190" y="42" width="34" height="91" rx="16" fill="url(#bail)" />
        <path d="M188 111h40" stroke="#ffe79a" strokeWidth="3" />
      </g>

      <g transform="translate(1060 520) scale(.33333)">
        <Band id="band5" x={140} y={22} h={428} stops={[[0, "#fff14e"], [0.38, "#ffff6c"], [0.55, "#fbc62e"], [0.66, "#f0ae22"], [1, "#b9820f"]]} />
        <path d="M136 445h50v35h-36c-8-6-12-20-14-35z" fill="#bd8614" />
        <path d="M135 30c-20 80-16 310 4 395 14-100 16-290-4-395z" fill="#87610e" />
        <path d="M155-10c-28 20-32 90-33 135M137 30c20 120 16 300 0 390M122 340c4 60 10 130 32 137" stroke="#ffc84e" strokeWidth="3" />

        <path d="M140 540c-26 30-30 70-27 120 6 100 36 170 22 250l15 42h117V720h-80l-20-170z" fill="url(#lower)" />
        <Band id="band7" x={156} y={720} h={232} stops={[[0, "#ffff60"], [0.18, "#f7da46"], [0.45, "#dba020"], [0.75, "#a07410"], [0.92, "#49340a"], [1, "#120c02"]]} />
        <path d="M140 540c-26 30-30 70-27 120 6 110 20 170 22 200 2 30-26 60-2 84M124 580c-6 110 24 180 34 280 2 30 8 70-8 88M134 580c-8 100 16 170 20 270 2 40-4 60-16 80" stroke="#f5bd48" strokeWidth="4" />
        <path d="M172 462c12-14 14-12 14 20v238c-20-10-22-30-20-60z" fill="#dd9e1c" stroke="#ffc95a" strokeWidth="3" />
        <Band id="band6" x={186} y={447} h={273} stops={[[0, "#d2971c"], [0.22, "#f5d23e"], [0.4, "#ffff62"], [0.58, "#e2a824"], [1, "#98700f"]]} />
        <Beads at={[[154, 513, 22], [158, 577, 23], [159, 642, 23]]} />

        <Band id="band8" x={162} y={952} h={120} stops={[[0, "#b98a1c"], [0.4, "#8e6812"], [0.8, "#3d2b07"], [1, "#000000"]]} />
        <Beads at={[[144, 968, 18], [146, 1000, 20], [147, 1030, 16]]} />
        <path d="M128 950c-8 50-4 100 22 138M140 1072c6-26 18-26 22 4M160 956c4 40 4 80 2 118M174 956c6 40 6 90 4 132" stroke="#f0b840" strokeWidth="4" />
      </g>
      <path d="M1149 223v659" stroke="#e8a83e" strokeWidth="2" />

      <g stroke="#fff">
        <path d="M1110 886v88M1149 886v88M1110 968h39" />
        <path d="M1119 965l-8 3 8 3zM1140 965l8 3-8 3z" fill="#fff" />
      </g>
      <text x="1086" y="965" fontSize="46" fill="#fff" stroke="#fff" strokeWidth=".5" fontFamily="Liberation Sans, sans-serif">3.48</text>
    </svg>
  );
}

function Viewport() {
  return (
    <section className="relative flex flex-1 justify-center overflow-hidden border-t border-l border-[#1d2b33] bg-black pt-9">
      <Pendant />
      <button className="absolute top-0 left-0 flex h-[18px] items-center rounded-br bg-[#3cb8e1] pl-2 text-[11px] text-[#12405c]">
        Right
        <span className="ml-2 flex h-[14px] w-[11px] items-center justify-center border-l border-[#12405c]">
          <svg viewBox="0 0 8 5" className="h-1 w-[7px]"><path d="M0 0l4 5 4-5z" fill="#0a2030" /></svg>
        </span>
      </button>
      <svg viewBox="0 0 24 54" className="absolute top-2 right-8 h-[54px] w-6" fill="none">
        <path d="M2 5l5-3h11l3 3-3 4H8zM2 5h19M9 2v7M15 2l-1 7" stroke="#4666b8" strokeWidth="1.400" />
        <path d="M8 14l6-5 7 5v3l-3 17h-8L7 17zM8 17h13M10 34v15l4 3 4-3V34M10 49h8" stroke="#e0a458" strokeWidth="1.500" />
      </svg>
      <svg viewBox="0 0 46 44" className="absolute bottom-8 left-8 h-11 w-[46px]" fill="none">
        <path d="M4 8v30" stroke="#b8701c" />
        <path d="M4 38h30" stroke="#2a7896" />
        <text x="6" y="10" fontSize="13" fill="#d8954a" fontFamily="Liberation Sans, sans-serif">z</text>
        <text x="36" y="40" fontSize="13" fill="#4aa8c8" fontFamily="Liberation Sans, sans-serif">y</text>
      </svg>
    </section>
  );
}

function Workspace() {
  return (
    <main className="flex min-w-0 flex-1 flex-col border-t border-l border-white bg-[#b0b2b4] pt-[6px] pr-2 pb-2 pl-[7px] font-['Open_Sans',sans-serif]">
      <div className="flex flex-1 flex-col bg-[#add6e4]">
        <CommandBar />
        <div className="flex h-7 items-end text-[11px]">
          <Tab label="Top" />
          <Tab label="Perspective" />
          <Tab label="Front" />
          <Tab label="Right" active />
          <Tab
            label={
              <svg viewBox="0 0 12 12" className="mx-1 mt-[3px] inline-block size-[11px] align-top" fill="none" aria-label="Add viewport">
                <path d="M4.500 1h3v3.500H11v3H7.500V11h-3V7.500H1v-3h3.500z" stroke="#3d6475" />
              </svg>
            }
          />
        </div>
        <Viewport />
      </div>
    </main>
  );
}

const taskIcons: { name: string; icon: ReactNode }[] = [
  { name: "Start", icon: <path d="M4 6.300l7-1v6.200H4zM12 5.200l8-1.200v7.500h-8zM4 12.500h7v6.200l-7-1zM12 12.500h8V20l-8-1.200z" fill="#fff" /> },
  { name: "Search", icon: <circle cx="11" cy="12" r="6.500" stroke="#fff" strokeWidth="2.200" /> },
  {
    name: "Edge",
    icon: (
      <>
        <circle cx="12" cy="12" r="12" fill="#1267b8" />
        <path d="M1 9C3 3 8 0 13 0c7 0 11 5 11 10 0 4-3 6-7 6-3 0-4-1-3-3 1-4-3-7-7-6-3 0-5 1-6 2z" fill="#45c8a0" />
        <path d="M1 9c4-5 13-4 13 2-2-3-7-1-6 5 1 5 6 8 12 5-8 7-19 1-20-9z" fill="#2b9de0" />
        <path d="M14 12c-2 5 3 8 8 5-2 4-7 6-11 3-4-4-2-9 3-8z" fill="#0c3f82" />
      </>
    ),
  },
  {
    name: "Microsoft Store",
    icon: (
      <>
        <path d="M7 6V2h10v4" stroke="#3a9fd0" strokeWidth="2" />
        <path d="M1 5h22v16c0 1-1 2-2 2H3c-1 0-2-1-2-2z" fill="#f4f4f0" />
        <path d="M8 9h4v4H8z" fill="#e0603c" />
        <path d="M13 9h4v4h-4z" fill="#7ab048" />
        <path d="M8 14h4v4H8z" fill="#3c98d4" />
        <path d="M13 14h4v4h-4z" fill="#e8b83c" />
      </>
    ),
  },
  {
    name: "Mail",
    icon: (
      <>
        <path d="M0 8l12-8 12 8v15H0z" fill="#1b5b9c" />
        <path d="M0 8h24l-12 9z" fill="#f2f8fc" />
        <path d="M0 8l12 9L24 8v15H0z" fill="#35a0e4" />
        <path d="M0 23l12-8 12 8z" fill="#1c80d0" />
      </>
    ),
  },
  {
    name: "Paint",
    icon: (
      <>
        <path d="M2 12C4 6 12 3 19 6c4 3 4 9 0 12s-6 0-8 2-9 2-10-2 0-4 1-6z" fill="#d8e4ee" />
        <circle cx="6" cy="12" r="2" fill="#d03838" />
        <circle cx="10" cy="8" r="1.500" fill="#48a048" />
        <circle cx="15" cy="9" r="1.500" fill="#e8b030" />
        <circle cx="7" cy="17" r="2" fill="#2f6fc8" />
        <path d="M21 1l2 2-9 17c-2 3-4 2-3 0z" fill="#b88a5c" />
      </>
    ),
  },
  {
    name: "Coc Coc",
    icon: (
      <>
        <circle cx="12" cy="13" r="11" fill="#7cc650" />
        <circle cx="12" cy="13" r="6" fill="#a4dc78" />
        <path d="M12 9l1-8 3 1-1 6zM15 9l5-7 3 2-6 6zM17 11l6-4 1 4-6 2z" fill="#f5f8ee" />
        <circle cx="12" cy="13" r="4" fill="#6cb83c" stroke="#f4f8ee" strokeWidth="1.800" />
      </>
    ),
  },
  {
    name: "File Explorer",
    icon: (
      <>
        <path d="M1 3h8l2 3h12v15H1z" fill="#e0a02c" />
        <path d="M1 7h22v14H1z" fill="#fbd56a" />
        <path d="M5 22v-9h14v9h-4v-4H9v4z" fill="#5c98b4" />
      </>
    ),
  },
  {
    name: "Matrix",
    icon: (
      <>
        <circle cx="12" cy="12" r="12" fill="#2fb0cc" />
        <path d="M2 10l4 8 4-8M11 18v1" stroke="#e3f8fc" strokeWidth="1.300" />
        <circle cx="16" cy="6" r="3.500" stroke="#e3f8fc" strokeWidth="1.300" />
        <circle cx="16" cy="14" r="4.500" stroke="#e3f8fc" strokeWidth="1.300" />
      </>
    ),
  },
];

function Taskbar() {
  return (
    <footer className="flex h-10 shrink-0 items-center bg-[#1c1c1c] font-['Open_Sans',sans-serif] text-white">
      {taskIcons.map(({ name, icon }) => (
        <button
          key={name}
          aria-label={name}
          className={`flex h-10 w-[49px] items-center justify-center ${
            name === "Matrix" ? "border-b-2 border-[#e8b4bc] bg-[#4a4a4a]" : ""
          }`}
        >
          <Ico>{icon}</Ico>
        </button>
      ))}
      <span className="ml-auto text-[11px] text-[#dcdcdc]">Desktop</span>
      <span className="mb-5 ml-2 text-[14px] leading-4">»</span>
      <Ico className="ml-6 size-[18px]">
        <circle cx="16" cy="7" r="4" stroke="#fff" strokeWidth="1.500" />
        <circle cx="8" cy="12" r="3.500" stroke="#fff" strokeWidth="1.500" />
        <path d="M2 22c0-8 12-8 12 0M14 13c5-3 9 0 9 5" stroke="#fff" strokeWidth="1.500" />
      </Ico>
      <svg viewBox="0 0 20 24" className="ml-[79px] h-6 w-5" fill="none">
        <path d="M3 4a3.500 3.500 0 017 0v11a5 5 0 11-7 0z" fill="#c8dcf0" />
        <path d="M6.500 5v13" stroke="#b86a80" strokeWidth="2" />
        <circle cx="6.500" cy="18.500" r="3.500" fill="#3a90e4" />
        <path d="M15 22V9M12 12l3-4 3 4M12 4h6" stroke="#c83c28" strokeWidth="2.400" />
      </svg>
      <span className="ml-[9px] text-[13px] leading-5">Gần mức kỷ lục</span>
      <ChevronUp className="ml-4 size-4" strokeWidth={1.8} />
      <Ico className="ml-2 size-[18px]">
        <path d="M7 5h16v11H7M12 21h8M15 16v5M1 3h6v7H1zM4 10v10h6" stroke="#fff" strokeWidth="1.600" />
      </Ico>
      <Ico className="ml-[6px] size-[18px]">
        <path d="M1 9h4l5-5v16l-5-5H1zM13 9c2 2 2 4 0 6" stroke="#fff" strokeWidth="1.600" />
        <path d="M16 6c4 4 4 8 0 12M19 3c6 6 6 12 0 18" stroke="#8d8d8d" strokeWidth="1.500" />
      </Ico>
      <Ico className="ml-[10px] size-[18px]">
        <path d="M8 18L17 3q2-2 3 0t-1 4l-9 13-4 1zM8 10c-8 0-8 10-1 10 5 0 8-7 5-10M15 17c3 0 6-3 8-6" stroke="#fff" strokeWidth="1.600" />
      </Ico>
      <svg viewBox="0 0 24 16" className="ml-[11px] h-4 w-6" fill="none" stroke="#fff">
        <path d="M1 2h22v12H1z" />
        <path d="M4 5h16M4 8h16" strokeDasharray="1.500 1" />
        <path d="M4 11h2M8 11h8M18 11h2" />
      </svg>
      <time className="ml-[10px] text-center text-[11px] leading-[18px]">
        3:06 PM
        <br />
        7/14/2023
      </time>
      <button aria-label="Notifications" className="mr-[11px] ml-4">
        <svg viewBox="0 0 26 28" className="h-7 w-[26px]" fill="none">
          <path d="M2 4h16v12h-8l-4 4v-4H2z" fill="#fff" />
          <path d="M5 7h10M5 10h10M5 13h7" stroke="#1c1c1c" />
          <circle cx="17" cy="18" r="8" fill="#3c3c3c" stroke="#9a9a9a" />
          <text x="17" y="22" fontSize="11" textAnchor="middle" fill="#fff" fontFamily="Open Sans, sans-serif">1</text>
        </svg>
      </button>
      <span className="mr-1 h-10 w-px bg-[#4d4d4d]" />
    </footer>
  );
}

export default function App() {
  return (
    <div className="flex min-h-screen flex-col overflow-hidden bg-[#2d2d2d]">
      <SharedGradients />
      <header>
        <div className="flex h-[23px] items-center bg-white pl-[2px] font-['Noto_Sans',sans-serif] text-[11px] text-[#8c8c8c]">
          <Ico className="size-4">
            <circle cx="12" cy="12" r="12" fill="#35b0cc" />
            <circle cx="14" cy="9" r="4" stroke="#bdeaf4" strokeWidth="1.500" />
            <circle cx="13" cy="16" r="4" stroke="#bdeaf4" strokeWidth="1.500" />
            <path d="M4 9c0 6 3 10 6 10" stroke="#bdeaf4" strokeWidth="1.500" />
          </Ico>
          <h1 className="ml-[5px]">Matrix 8.0 (64-bit) - 6150.3dm</h1>
          <div className="mr-[18px] ml-auto flex items-center gap-[33px]">
            <button aria-label="Minimize"><Minus className="size-[14px]" strokeWidth={1.6} /></button>
            <button aria-label="Restore">
              <svg viewBox="0 0 11 11" className="size-[11px]" fill="none" stroke="#8c8c8c">
                <path d="M.5 3.500h7v7h-7zM3.500 3.500v-3h7v7h-3" />
              </svg>
            </button>
            <button aria-label="Close window"><X className="size-[15px]" strokeWidth={1.6} /></button>
          </div>
        </div>
        <nav className="flex h-[21px] items-center gap-[11px] bg-[#e9e9e9] pt-px pl-[6px] font-['Liberation_Sans',sans-serif] text-[11px] text-black">
          {menus.map((m) => (
            <button key={m}>{m}</button>
          ))}
        </nav>
      </header>
      <div className="flex flex-1">
        <Sidebar />
        <Workspace />
      </div>
      <Taskbar />
    </div>
  );
}
